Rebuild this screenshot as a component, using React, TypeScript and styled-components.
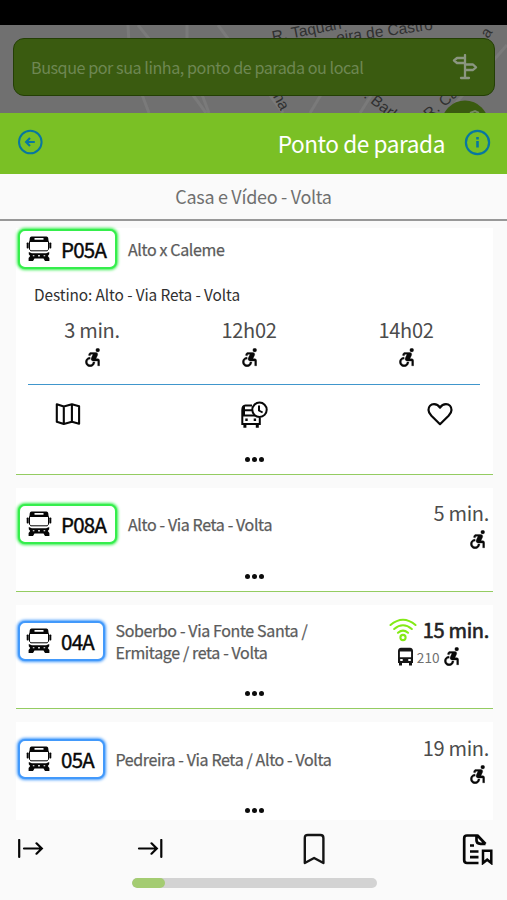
import React from "react";
import styled, { createGlobalStyle } from "styled-components";

const Global = createGlobalStyle`
  * { box-sizing: border-box; }
  body { margin: 0; background: #fafafa; font-family: "Noto Sans CJK SC", "Noto Sans", sans-serif; }
  svg { display: block; flex: none; }
`;

const Screen = styled.div`
  width: 507px;
  height: 900px;
  overflow: hidden;
  background: #fafafa;
  display: flex;
  flex-direction: column;
`;

const StatusBar = styled.div`
  height: 25px;
  flex: none;
  background: #000;
`;

const MapArea = styled.div`
  position: relative;
  height: 88px;
  flex: none;
  background: #707070;
  padding: 13px 12px 0 13px;
`;

const MapCanvas = styled.svg`
  position: absolute;
  inset: 0;
`;

const SearchBox = styled.div`
  position: relative;
  height: 58px;
  border: 1px solid #243f05;
  border-radius: 11px;
  background: #3a5b10;
  display: flex;
  align-items: center;
  justify-content: space-between;
  padding: 0 16px 0 17px;
`;

const Placeholder = styled.span`
  font-size: 16.15px;
  line-height: 24px;
  letter-spacing: -0.45px;
  color: #6e8753;
`;

const Header = styled.header`
  height: 61px;
  flex: none;
  background: #7ac025;
  display: flex;
  align-items: center;
  justify-content: space-between;
  padding: 0 16px 3px 17px;
`;

const TitleGroup = styled.div`
  display: flex;
  align-items: center;
  gap: 19px;
`;

const Title = styled.h1`
  margin: 3px 0 0;
  font-size: 22.6px;
  line-height: 32px;
  letter-spacing: -0.42px;
  font-weight: 400;
  color: #fff;
`;

const Subtitle = styled.div`
  height: 46.5px;
  flex: none;
  border-bottom: 2px solid #989898;
  color: #707070;
  font-size: 18px;
  letter-spacing: -0.32px;
  line-height: 45px;
  text-align: center;
`;

const List = styled.main`
  height: 599.5px;
  flex: none;
  overflow: hidden;
  padding: 7px 14px 0 16px;
  display: flex;
  flex-direction: column;
  gap: 13px;
`;

const Card = styled.section<{ $height: number }>`
  height: ${(p) => p.$height}px;
  flex: none;
  background: #fff;
  border-bottom: 1.5px solid #94cc61;
  display: flex;
  flex-direction: column;
`;

const LineRow = styled.div<{ $height: number; $gap: number }>`
  height: ${(p) => p.$height}px;
  margin-bottom: ${(p) => p.$gap}px;
  flex: none;
  display: flex;
  align-items: center;
  padding: 0 4px 0 1.5px;
`;

const Badge = styled.div<{ $color: string; $width: number }>`
  width: ${(p) => p.$width}px;
  height: 40px;
  flex: none;
  border: 2px solid ${(p) => p.$color};
  border-radius: 7px;
  box-shadow: 0 0 3px 1px ${(p) => p.$color};
  background: #fff;
  display: flex;
  align-items: center;
  padding-left: 6px;
  gap: 9.5px;
`;

const Code = styled.span`
  font-size: 20.5px;
  line-height: 30px;
  letter-spacing: -0.75px;
  color: #080808;
  -webkit-text-stroke: 0.4px #080808;
  white-space: nowrap;
`;

const LineName = styled.div`
  flex: 1;
  margin-left: 11px;
  font-size: 16px;
  line-height: 22px;
  letter-spacing: -0.37px;
  color: #5b5b5b;
  -webkit-text-stroke: 0.25px #5b5b5b;
  white-space: pre-line;
`;

const Arrival = styled.div`
  display: flex;
  flex-direction: column;
  align-items: flex-end;
  padding-top: 5px;
`;

const TimeRow = styled.div`
  display: flex;
  align-items: center;
  gap: 6px;
`;

const Time = styled.span<{ $live?: boolean }>`
  font-size: 20px;
  line-height: 26px;
  letter-spacing: -0.3px;
  color: ${(p) => (p.$live ? "#222" : "#4c4c4c")};
  -webkit-text-stroke: ${(p) => (p.$live ? "0.6px #222" : "0")};
  white-space: nowrap;
`;

const VehicleRow = styled.div<{ $live?: boolean }>`
  display: flex;
  align-items: center;
  height: 27px;
  padding-right: ${(p) => (p.$live ? 30.5 : 4)}px;
`;

const Fleet = styled.span`
  font-size: 13.6px;
  line-height: 20px;
  color: #707070;
  margin: 0 4px 0 3px;
`;

const DotsRow = styled.div`
  height: 5px;
  display: flex;
  justify-content: center;
  gap: 2px;
  padding-right: 1px;
`;

const Dot = styled.i`
  width: 5px;
  height: 5px;
  border-radius: 50%;
  background: #0c0c0c;
`;

const Destination = styled.p`
  margin: 0 0 0 18px;
  font-size: 15.4px;
  line-height: 24px;
  letter-spacing: -0.1px;
  color: #303030;
`;

const Times = styled.div`
  display: grid;
  grid-template-columns: repeat(3, 157px);
  justify-content: center;
  margin: 11px 11px 0 0;
`;

const TimeCell = styled.div`
  display: flex;
  flex-direction: column;
  align-items: center;
  gap: 5px;
  height: 67.5px;
`;

const Actions = styled.div`
  margin: 0 13px 0 12px;
  border-top: 1.5px solid #4096cc;
  height: 72.5px;
  padding: 16px 27px 0 27px;
  display: flex;
  justify-content: space-between;
`;

const Footer = styled.footer`
  height: 80px;
  flex: none;
  display: flex;
  flex-direction: column;
  align-items: center;
`;

const Tabs = styled.nav`
  width: 100%;
  height: 58px;
  display: grid;
  grid-template-columns: 119px 165.5px 160.5px 32px;
  align-items: center;
  padding-left: 17px;
`;

const Track = styled.div`
  width: 245px;
  height: 10px;
  border-radius: 5px;
  background: #d3d3d3;
  overflow: hidden;
  margin-left: 1px;
`;

const Progress = styled.div`
  width: 33px;
  height: 10px;
  border-radius: 5px;
  background: #a4cc72;
`;

const BusFront = () => (
  <svg width="26" height="26" viewBox="0 0 26 26" fill="#060606">
    <path fillRule="evenodd" d="M5.500.5h15Q22 .5 22.200 2l.5 4H3.300l.5-4Q4 .5 5.500.5zM8.500 2v1.700h9V2z" />
    <path d="M3.500 5.500v7.800l1.300 1.500h16.400l1.300-1.500V5.500" fill="none" stroke="#060606" strokeWidth="1" />
    <rect x="0.700" y="6.500" width="2" height="6" rx=".8" />
    <rect x="23.300" y="6.500" width="2" height="6" rx=".8" />
    <path fillRule="evenodd" d="M2.800 16l3 1.200h14.400l3-1.200v2.200L21.800 20l1.600 2v3H19l-1.500-2.500h-9L7 25H2.600v-3l1.600-2-1.400-1.800zM12.200 19v1.500h1.600V19zM6.800 19.200v1h1.600v-1zM17.600 19.200v1h1.600v-1z" />
  </svg>
);

const Wheelchair = () => (
  <svg width="15" height="19" viewBox="4.800 2.300 15.400 20" fill="#080808" stroke="#080808" strokeWidth=".35">
    <circle cx="18" cy="4.500" r="2" />
    <path d="M15 17h-2c0 1.650-1.350 3-3 3s-3-1.350-3-3 1.350-3 3-3v-2c-2.760 0-5 2.240-5 5s2.240 5 5 5 5-2.240 5-5zm3-3.500h-1.860l1.670-3.670C18.420 8.500 17.440 7 15.960 7h-5.200c-.81 0-1.540.47-1.870 1.200L8.220 10l1.920.53.65-1.530H13l-1.830 4.100c-.6 1.330.39 2.900 1.850 2.900H18v5h2v-5.500c0-1.100-.9-2-2-2z" />
  </svg>
);

const Signpost = () => (
  <svg width="26" height="26" viewBox="0 0 26 26" fill="none" stroke="#8b9681" strokeWidth="2.300" strokeLinejoin="round" strokeLinecap="round">
    <path d="M13 1v23M9 24h8M13 4H5L2 6.500 5 9h8M13 10.500h8l3 2.800-3 2.700h-8" />
  </svg>
);

const BackIcon = () => (
  <svg width="26" height="26" viewBox="0 0 26 26" fill="none" stroke="#0877a0" strokeWidth="2">
    <circle cx="13.300" cy="13" r="11.300" />
    <path d="M17.800 13H9.500M13 9l-3.900 4 3.900 4" strokeWidth="2.200" />
  </svg>
);

const InfoIcon = () => (
  <svg width="27" height="27" viewBox="0 0 27 27" fill="none" stroke="#0877a0" strokeWidth="2.200">
    <circle cx="13.500" cy="13.500" r="11.600" />
    <path d="M13.500 12v6.500M13.500 8v2.400" strokeWidth="2.600" />
  </svg>
);

const MapIcon = () => (
  <svg width="26" height="26" viewBox="0 0 26 26" fill="none" stroke="#080808" strokeWidth="2.100" strokeLinejoin="round">
    <path d="M1.800 3.200l7 2.400 8.100-2.400 7.200 2v17.500l-7.200-2-8.100 2.300-7-2.300zM8.800 5.600v17.200M16.900 3.200v17.500" />
  </svg>
);

const ScheduleIcon = () => (
  <svg width="28" height="28" viewBox="0 0 28 28" fill="none" stroke="#080808" strokeWidth="2">
    <path d="M12 4.500H5.500Q2.300 4.700 2.300 9v14h17.500v-6.500M2.300 9.300H12M2.300 14.500H15M4 5v9" />
    <circle cx="19.500" cy="8.800" r="7.200" />
    <path d="M19 4.500v5l3.600 2" />
    <path d="M4.900 23v3.800M17.300 23v3.800" strokeWidth="3" />
    <path d="M5.300 18.700h2.400M13.700 18.700h2.400" strokeWidth="2.400" />
  </svg>
);

const HeartIcon = () => (
  <svg width="26" height="26" viewBox="0 0 26 26" fill="none" stroke="#080808" strokeWidth="2.200" strokeLinejoin="round">
    <path d="M13 23.200L4.400 14.800Q1.500 11.800 1.500 9C1.500 5.400 3.900 3.200 7 3.200q3.800 0 6 3.500Q15.200 3.200 19 3.200c3.100 0 5.500 2.200 5.500 5.800q0 2.800-2.900 5.800z" />
  </svg>
);

const WifiIcon = () => (
  <svg width="28" height="24" viewBox="0 0 28 24" fill="none" stroke="#83ea16" strokeWidth="2.100" strokeLinecap="round">
    <path d="M1.500 7Q14-3.500 26.500 7M5.200 11q8.800-7.500 17.600 0M9 14.700q5-4.200 10 0" />
    <circle cx="14" cy="19.500" r="2.600" />
  </svg>
);

const SmallBus = () => (
  <svg width="17" height="19" viewBox="0 0 17 19" fill="#161616">
    <path fillRule="evenodd" d="M4 .7h9q3 .3 3 3.300v12h-1v2.500h-3V16H5v2.500H2V16H1V4Q1 1 4 .7zM2.900 4.500v5.700h11.200V4.500zM3.200 12v1.900h2.500V12zM11.300 12v1.900h2.500V12z" />
  </svg>
);

const FromIcon = () => (
  <svg width="27" height="20" viewBox="0 0 27 20" fill="none" stroke="#060606" strokeWidth="2.200" strokeLinecap="round">
    <path d="M2.200 1v17M7 9.500h17.500M19.500 4.300l5.300 5.200-5.300 5.200" />
  </svg>
);

const ToIcon = () => (
  <svg width="27" height="20" viewBox="0 0 27 20" fill="none" stroke="#060606" strokeWidth="2.200" strokeLinecap="round">
    <path d="M25.300 1v17M3 9.500h17.500M15.500 4.300l5.300 5.200-5.300 5.200" />
  </svg>
);

const BookmarkIcon = () => (
  <svg width="24" height="32" viewBox="0 0 24 32" fill="none" stroke="#141414" strokeWidth="2.400" strokeLinejoin="round">
    <path d="M2.800 30V5q0-3 3-3h12.600q3 0 3 3v25l-9.300-5z" />
  </svg>
);

const SavedReportIcon = () => (
  <svg width="31" height="32" viewBox="0 0 31 32" fill="none" stroke="#060606" strokeWidth="2.700">
    <path d="M16.500 30H5q-2.800 0-2.800-2.800V5.300Q2.200 2.500 5 2.500h10.500l8 8.500M14.500 3v4.300q0 3.500 4 3.500h5" strokeLinejoin="round" />
    <path d="M8 12.500h4M8 18.500h8.500M8 24.200h8.500" />
    <path d="M21 30V17.800h8.300V30l-4.100-3.300z" strokeWidth="2.500" />
  </svg>
);

const MapBackdrop = () => (
  <MapCanvas width="507" height="88" viewBox="0 25 507 88">
    <g fill="none" stroke="#7a7a7a" strokeWidth="3">
      <path d="M128 25l2 38 19 50M138 25l44 55 24 33M187 25v30l22 58M218 25l65 88M310 113l30-50M360 113l38-60M507 45l-60 68" />
    </g>
    <g fill="#303030" fontFamily="Liberation Sans" fontSize="15.500">
      <text transform="translate(273 42) rotate(-11)">R. Taquari</text>
      <text transform="translate(337 43) rotate(-8)">eira de Castro</text>
      <text transform="translate(488 39) rotate(-55)">a</text>
      <text transform="translate(263 78) rotate(62)">elena</text>
      <text transform="translate(363 97) rotate(38)">. Barbosa</text>
      <text transform="translate(429 120) rotate(-40)">R. Cas</text>
    </g>
    <circle cx="465" cy="124" r="23.500" fill="#3a5b10" />
    <path d="M470 113l5-2 4 2" stroke="#758863" strokeWidth="2" fill="none" />
  </MapCanvas>
);

const Dots = () => (
  <DotsRow>
    <Dot />
    <Dot />
    <Dot />
  </DotsRow>
);

const LineBadge = ({ code }: { code: string }) => {
  const long = code.length > 3;
  return (
    <Badge $width={long ? 99.5 : 87} $color={long ? "#35ee4c" : "#4299fb"}>
      <BusFront />
      <Code>{code}</Code>
    </Badge>
  );
};

interface Line {
  code: string;
  name: string;
  time: string;
  fleet?: string;
}

const lines: Line[] = [
  { code: "P08A", name: "Alto - Via Reta - Volta", time: "5 min." },
  { code: "04A", name: "Soberbo - Via Fonte Santa /\nErmitage / reta - Volta", time: "15 min.", fleet: "210" },
  { code: "05A", name: "Pedreira - Via Reta / Alto - Volta", time: "19 min." },
];

const LineCard = ({ line }: { line: Line }) => {
  const live = Boolean(line.fleet);
  return (
    <Card $height={104.3}>
      <LineRow $height={73} $gap={13}>
        <LineBadge code={line.code} />
        <LineName>{line.name}</LineName>
        <Arrival>
          <TimeRow>
            {live && <WifiIcon />}
            <Time $live={live}>{line.time}</Time>
          </TimeRow>
          <VehicleRow $live={live}>
            {live && <SmallBus />}
            {live && <Fleet>{line.fleet}</Fleet>}
            <Wheelchair />
          </VehicleRow>
        </Arrival>
      </LineRow>
      <Dots />
    </Card>
  );
};

export default function App() {
  return (
    <Screen>
      <Global />
      <StatusBar />
      <MapArea>
        <MapBackdrop />
        <SearchBox>
          <Placeholder>Busque por sua linha, ponto de parada ou local</Placeholder>
          <Signpost />
        </SearchBox>
      </MapArea>
      <Header>
        <BackIcon />
        <TitleGroup>
          <Title>Ponto de parada</Title>
          <InfoIcon />
        </TitleGroup>
      </Header>
      <Subtitle>Casa e Vídeo - Volta</Subtitle>
      <List>
        <Card $height={247.2}>
          <LineRow $height={42} $gap={12}>
            <LineBadge code="P05A" />
            <LineName>Alto x Caleme</LineName>
          </LineRow>
          <Destination>Destino: Alto - Via Reta - Volta</Destination>
          <Times>
            {["3 min.", "12h02", "14h02"].map((t) => (
              <TimeCell key={t}>
                <Time>{t}</Time>
                <Wheelchair />
              </TimeCell>
            ))}
          </Times>
          <Actions>
            <MapIcon />
            <ScheduleIcon />
            <HeartIcon />
          </Actions>
          <Dots />
        </Card>
        {lines.map((line) => (
          <LineCard key={line.code} line={line} />
        ))}
      </List>
      <Footer>
        <Tabs>
          <FromIcon />
          <ToIcon />
          <BookmarkIcon />
          <SavedReportIcon />
        </Tabs>
        <Track>
          <Progress />
        </Track>
      </Footer>
    </Screen>
  );
}
